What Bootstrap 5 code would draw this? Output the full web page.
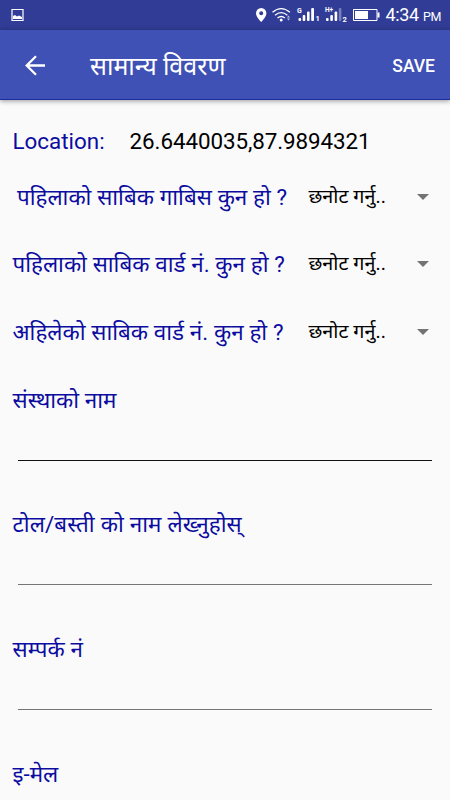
<!DOCTYPE html>
<html lang="ne">
<head>
<meta charset="utf-8">
<meta name="viewport" content="width=device-width, initial-scale=1">
<title>सामान्य विवरण</title>
<link href="https://cdn.jsdelivr.net/npm/bootstrap@5.3.0/dist/css/bootstrap.min.css" rel="stylesheet">
<style>
body{font-family:Roboto,"Noto Sans",sans-serif;font-size:22.4px;line-height:30px;background:#fafafa;color:#000}
.status-bar{height:30px;background:#303c96;color:#fff;line-height:30px}
.clock{font-size:18px;width:70px;padding-left:5.5px;letter-spacing:-.35px;white-space:nowrap;padding-top:2px}
.clock span{font-size:12.5px}
.app-bar{height:70px;background:#3f51b5;color:#fff;border-bottom:1px solid #1a2d9c;box-shadow:0 1px 5px rgba(0,0,0,.4);padding:1px 15px 0 25px}
.app-title{font-size:25px;font-weight:400;margin:3px 0 0 44px}
.save-btn{font-size:17.5px;font-weight:500;line-height:30px;margin-top:1px}
.field-label{color:#0c0ca0;white-space:nowrap;word-spacing:.25px}
.location-row{height:63px;padding:26px 13px 0}
.location-row .field-label{margin-left:-.5px}
.coords{margin-left:25px;letter-spacing:-.08px}
.choice-row{height:67.5px;padding:0 21.5px 0 12.5px}
.choice-row.first .field-label{padding-left:4.5px}
.choice-label{width:296px}
.choice-value{font-size:19.8px;white-space:nowrap}
.fields{padding-top:3px}
.text-field{height:124.7px;padding:0 18px 0 12.500px}
.text-field.tole-field{letter-spacing:.12px}
.text-field:last-child{height:auto}
.line-input{background:transparent;border:0;border-bottom:1px solid #757575;border-radius:0;margin-left:5px;width:414.500px;height:46px;padding:0}
.line-input.active-line{border-color:#111}
</style>
<script src="https://cdn.jsdelivr.net/npm/bootstrap@5.3.0/dist/js/bootstrap.bundle.min.js"></script>
</head>
<body>
<div class="status-bar d-flex align-items-center justify-content-between">
  <svg class="ms-1" width="26" height="30" viewBox="0 0 26 30"><path d="M8 9.500h11v11H8z" fill="none" stroke="#fff" stroke-width="1.2"/><path d="M9 19v-3l2-1 2 1.500 2-1 3 1.500v2z" fill="#fff"/></svg>
  <div class="d-flex align-items-center">
    <svg width="130" height="30" viewBox="250 0 130 30" fill="#fff">
      <path fill-rule="evenodd" d="M261.200 8a5.200 5.200 0 0 0-5.200 5.200c0 3.800 5.200 8.800 5.200 8.800s5.200-5 5.200-8.800A5.200 5.200 0 0 0 261.200 8zm0 3.200a2 2 0 1 1 0 4 2 2 0 0 1 0-4z"/>
      <g fill="none" stroke="#fff" stroke-width="1.300"><path d="M272.500 12.300q8.700-7.300 17.400 0M275 15.200q6.200-5 12.400 0M277.500 18q3.700-3 7.400 0"/></g>
      <circle cx="281.200" cy="20" r="1.500"/><path d="M288.500 15.500l1.500 2h-3zM287 18.500h3l-1.500 2z" opacity=".7"/>
      <rect x="298.500" y="18" width="2.600" height="3" rx="1"/><rect x="302.700" y="15" width="2.600" height="6" rx="1"/><rect x="307" y="11.500" width="2.600" height="9.500" rx="1"/><rect x="311.200" y="8" width="2.800" height="13" rx="1"/>
      <rect x="326" y="18" width="2.600" height="3" rx="1"/><rect x="330.300" y="15" width="2.600" height="6" rx="1"/><rect x="334.600" y="11.500" width="2.600" height="9.500" rx="1"/><rect x="338.800" y="8" width="2.600" height="13" rx="1" opacity=".35"/>
      <g font-family="Roboto,sans-serif" font-weight="700"><text x="297" y="12.800" font-size="7">G</text><text x="325" y="12" font-size="6.500">H+</text><text x="315.600" y="21.300" font-size="7.500">1</text><text x="342.500" y="21.600" font-size="7.500">2</text></g>
      <path d="M353.500 9.500h23.500v11h-23.500z" fill="none" stroke="#fff"/><path d="M355 11h13v8h-13zM377.500 12.500h2v5h-2z"/>
    </svg>
    <span class="clock">4:34 <span>PM</span></span>
  </div>
</div>
<header class="app-bar d-flex align-items-center">
  <svg width="21" height="21" viewBox="0 0 21 21" fill="none" stroke="#fff" stroke-width="2.300"><path d="M20 10.500H2M11 1.200L1.700 10.500l9.300 9.300"/></svg>
  <h1 class="app-title">सामान्य विवरण</h1>
  <button class="save-btn btn p-0 border-0 text-white ms-auto">SAVE</button>
</header>
<main>
  <div class="location-row d-flex"><span class="field-label">Location:</span><span class="coords">26.6440035,87.9894321</span></div>
  <div class="choice-row first d-flex align-items-center"><span class="choice-label field-label">पहिलाको साबिक गाबिस कुन हो ?</span><span class="choice-value">छनोट गर्नु..</span><svg class="ms-auto" width="12" height="6" viewBox="0 0 12 6"><path d="M0 0h12L6 6z" fill="#737373"/></svg></div>
  <div class="choice-row d-flex align-items-center"><span class="choice-label field-label">पहिलाको साबिक वार्ड नं. कुन हो ?</span><span class="choice-value">छनोट गर्नु..</span><svg class="ms-auto" width="12" height="6" viewBox="0 0 12 6"><path d="M0 0h12L6 6z" fill="#737373"/></svg></div>
  <div class="choice-row d-flex align-items-center"><span class="choice-label field-label">अहिलेको साबिक वार्ड नं. कुन हो ?</span><span class="choice-value">छनोट गर्नु..</span><svg class="ms-auto" width="12" height="6" viewBox="0 0 12 6"><path d="M0 0h12L6 6z" fill="#737373"/></svg></div>
  <div class="fields">
    <div class="text-field pt-3"><label class="field-label d-block" for="org">संस्थाको नाम</label><input id="org" class="line-input active-line d-block"></div>
    <div class="text-field tole-field pt-3"><label class="field-label d-block" for="tole">टोल/बस्ती को नाम लेख्नुहोस्</label><input id="tole" class="line-input d-block"></div>
    <div class="text-field pt-3"><label class="field-label d-block" for="contact">सम्पर्क नं</label><input id="contact" class="line-input d-block"></div>
    <div class="text-field pt-3"><span class="field-label d-block">इ-मेल</span></div>
  </div>
</main>
</body>
</html>
